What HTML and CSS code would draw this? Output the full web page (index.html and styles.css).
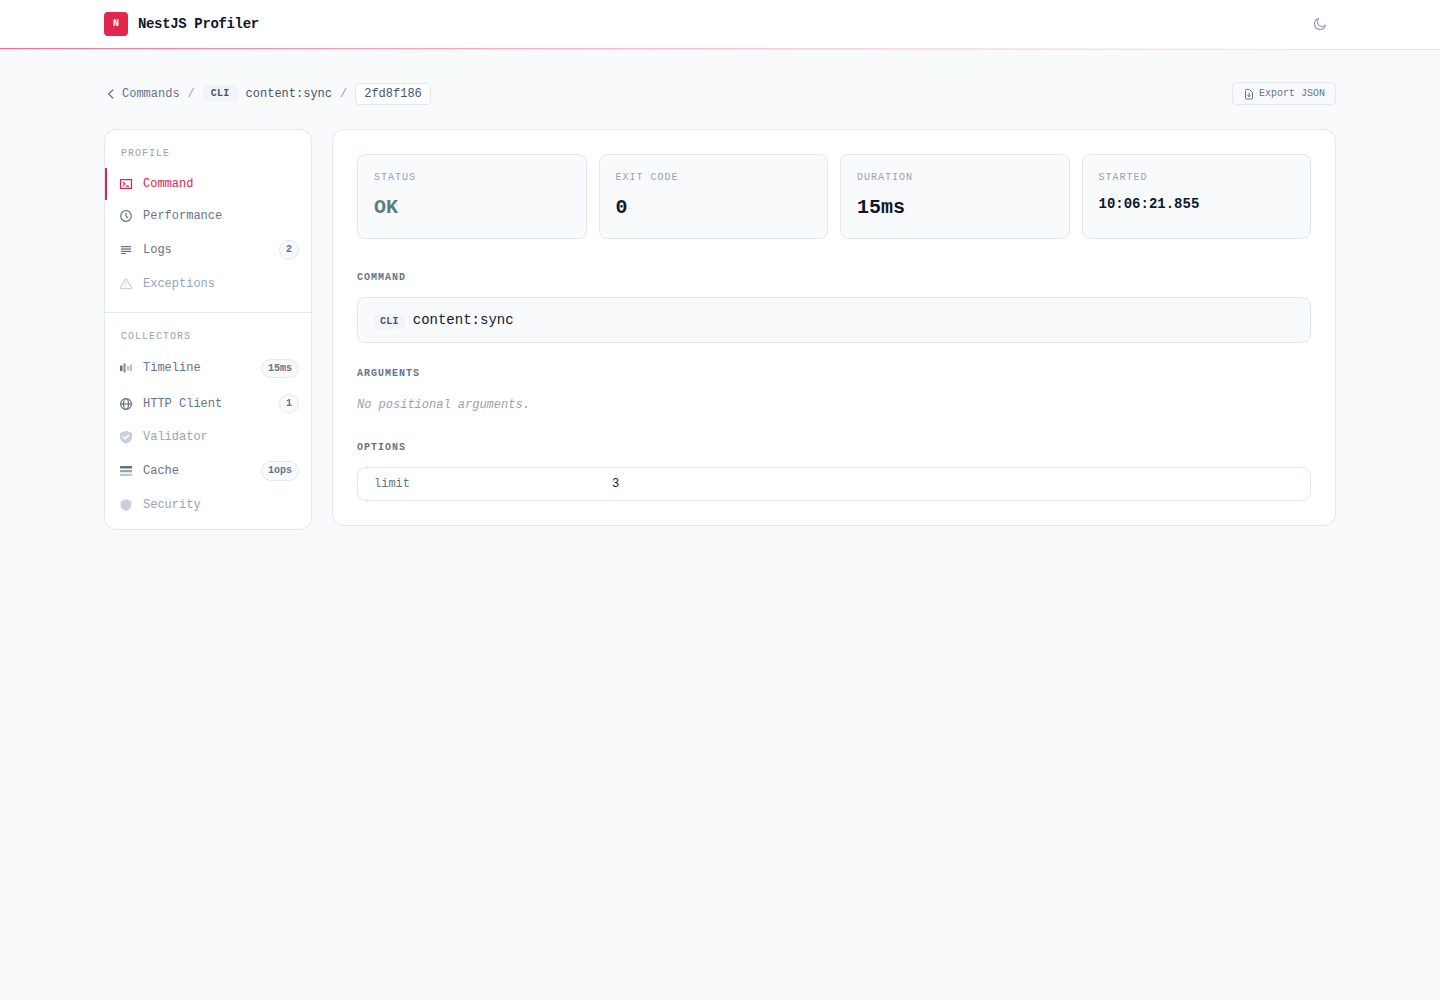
FILE: index.html
```html
<!DOCTYPE html>
<html lang="en">
<head>
<meta charset="utf-8">
<title>NestJS Profiler</title>
<link rel="stylesheet" href="styles.css">
</head>
<body>
<header class="header">
  <div class="header-inner">
    <div class="brand"><span class="logo">N</span><span class="brand-name">NestJS Profiler</span></div>
    <button class="theme" aria-label="Theme"><svg width="14" height="14" viewBox="0 0 14 14" fill="none" stroke="currentColor" stroke-width="1.2" stroke-linejoin="round"><path d="M12.400 8.200A5.500 5.500 0 1 1 5.800 1.600a4.600 4.600 0 0 0 6.600 6.600z"/></svg></button>
  </div>
  <div class="accent"></div>
</header>
<main class="page">
  <div class="topbar">
    <nav class="crumbs">
      <a class="back"><svg width="14" height="14" viewBox="0 0 14 14" fill="none" stroke="currentColor" stroke-width="1.2" stroke-linecap="round" stroke-linejoin="round"><path d="M8.800 3 4.700 7l4.100 4"/></svg>Commands</a>
      <span class="sep">/</span><span class="tag">CLI</span><span class="crumb-name">content:sync</span><span class="sep">/</span><span class="hash">2fd8f186</span>
    </nav>
    <button class="export"><svg width="12" height="12" viewBox="0 0 12 12" fill="none" stroke="currentColor"><path d="M2.500 10V2.500a1 1 0 0 1 1-1h3l3 3V10a1 1 0 0 1-1 1h-5a1 1 0 0 1-1-1z"/><path d="M6 4.800v4M4.300 7 6 8.700 7.700 7"/></svg>Export JSON</button>
  </div>
  <div class="columns">
    <aside class="card sidebar">
      <section class="group">
        <h2 class="group-title">PROFILE</h2>
        <a class="item active"><svg class="icon" viewBox="0 0 14 14" fill="none" stroke="currentColor" stroke-width="1.200"><path d="M1.500 2.700h11v8.600h-11z"/><path d="M4 5l2 2-2 2M7 9.200h3"/></svg>Command</a>
        <a class="item"><svg class="icon" viewBox="0 0 14 14" fill="none" stroke="currentColor" stroke-width="1.200"><circle cx="7" cy="7" r="5.300"/><path d="M7 3.800V7l2 2.200"/></svg>Performance</a>
        <a class="item badged"><svg class="icon" viewBox="0 0 14 14" fill="currentColor"><path d="M2 3h10v1.200H2zM2 7.800h10V9H2zM2 10h5v1H2z"/><path opacity=".65" d="M2 5h10v2H2z"/></svg>Logs<span class="badge">2</span></a>
        <a class="item off"><svg class="icon" viewBox="0 0 14 14" fill="none" stroke="currentColor" stroke-width="1.200" stroke-linejoin="round"><path d="M6.100 2.800q.9-1.300 1.800 0l4.400 7.300q.6 1.400-.9 1.600H2.600q-1.500-.2-.9-1.600z"/><path d="M7 5.500v2.600M7 9v1"/></svg>Exceptions</a>
      </section>
      <section class="group collectors">
        <h2 class="group-title">COLLECTORS</h2>
        <a class="item badged"><svg class="icon" viewBox="0 0 14 14" fill="currentColor"><path d="M1 4.500h2.500V10H1z"/><path opacity=".7" d="M4.300 2.500h2.500v9H4.300z"/><path opacity=".4" d="M8 5h2.500v4.500H8z"/><path opacity=".6" d="M11.300 3.500h1.500V10h-1.500z"/></svg>Timeline<span class="badge">15ms</span></a>
        <a class="item badged"><svg class="icon" viewBox="0 0 14 14" fill="none" stroke="currentColor" stroke-width="1.200"><circle cx="7" cy="7" r="5.400"/><ellipse cx="7" cy="7" rx="2.500" ry="5.400"/><path d="M1.600 7h10.800"/></svg>HTTP Client<span class="badge">1</span></a>
        <a class="item off"><svg class="icon" viewBox="0 0 14 14" fill="currentColor"><path d="M7 .8l6 2.300v4.100c0 3.100-2.500 5.200-6 6.600-3.500-1.400-6-3.500-6-6.600V3.100z"/><path d="m4.300 6.700 1.900 1.900 3.700-3.700" fill="none" stroke="#fff" stroke-width="1.600"/></svg>Validator</a>
        <a class="item badged"><svg class="icon cache" viewBox="0 0 14 14" fill="currentColor"><rect x="1" y="2" width="12" height="2.500" rx=".5"/><rect x="1" y="6" width="12" height="2.300" rx=".5" opacity=".65"/><rect x="1" y="9.700" width="12" height="2.300" rx=".5" opacity=".4"/></svg>Cache<span class="badge">1ops</span></a>
        <a class="item off"><svg class="icon" viewBox="0 0 14 14" fill="currentColor"><path d="M7 1.200l5.300 2v4c0 2.800-2.200 4.700-5.300 5.900-3.100-1.200-5.300-3.100-5.300-5.900v-4z"/></svg>Security</a>
      </section>
    </aside>
    <div class="card content">
      <div class="stats">
        <div class="stat"><div class="label">STATUS</div><div class="value ok">OK</div></div>
        <div class="stat"><div class="label">EXIT CODE</div><div class="value">0</div></div>
        <div class="stat"><div class="label">DURATION</div><div class="value">15ms</div></div>
        <div class="stat"><div class="label">STARTED</div><div class="value time">10:06:21.855</div></div>
      </div>
      <h3 class="title">COMMAND</h3>
      <div class="command"><span class="tag small">CLI</span><span>content:sync</span></div>
      <h3 class="title">ARGUMENTS</h3>
      <p class="empty">No positional arguments.</p>
      <h3 class="title">OPTIONS</h3>
      <div class="option"><span class="key">limit</span><span>3</span></div>
    </div>
  </div>
</main>
</body>
</html>
```

FILE: styles.css
```css
* { box-sizing: border-box; }
body { margin: 0; background: #f8fafc; color: #0f172a; font: 12px/16px "Liberation Mono", monospace; }
button { font: inherit; }
h2, h3, p { margin: 0; }
svg { display: block; flex: none; }
.header { height: 50px; background: #fff; border-bottom: 1px solid #e2e8f0; }
.header-inner { width: 1232px; height: 48px; margin: 0 auto; display: flex; align-items: center; justify-content: space-between; }
.accent { height: 1px; background: linear-gradient(90deg, #ee6f8b, #f7a8b9 30%, #fbd5dd 60%, #fff 90%); }
.brand { display: flex; align-items: center; gap: 10px; }
.logo { width: 24px; height: 24px; border-radius: 4px; background: #e0284f; color: #fff; font-size: 10px; line-height: 23px; font-weight: 700; text-align: center; }
.brand-name { font-size: 14px; font-weight: 700; letter-spacing: -.35px; }
.theme { width: 32px; height: 32px; padding: 9px; border: 0; background: none; color: #94a3b8; }
.page { width: 1232px; margin: 0 auto; padding-top: 32px; }
.topbar { height: 23px; display: flex; align-items: center; justify-content: space-between; margin-bottom: 24px; }
.crumbs { display: flex; align-items: center; gap: 8px; color: #64748b; }
.back { display: flex; align-items: center; gap: 4px; }
.sep { color: #94a3b8; }
.tag { height: 17px; padding: 0 8px; border-radius: 4px; background: #f1f5f9; color: #475569; font-size: 10px; line-height: 17px; font-weight: 700; letter-spacing: .25px; }
.crumb-name, .hash { color: #475569; }
.hash { height: 22px; line-height: 20px; padding: 0 8px; background: #fff; border: 1px solid #e2e8f0; border-radius: 4px; }
.export { height: 23px; display: flex; align-items: center; gap: 4px; padding: 0 10px; border: 1px solid #e2e8f0; border-radius: 4px; background: #f8fafc; color: #64748b; font-size: 10px; line-height: 20px; }
.columns { display: grid; grid-template-columns: 208px 1004px; gap: 20px; align-items: start; }
.card { background: #fff; border: 1px solid #e2e8f0; border-radius: 12px; }
.group { padding-bottom: 12px; border-bottom: 1px solid #e2e8f0; }
.group-title { height: 38px; padding: 16px 16px 0; font-size: 10px; font-weight: 400; letter-spacing: 1px; color: #94a3b8; }
.item { height: 32px; display: flex; align-items: center; gap: 10px; padding: 0 12px 0 14px; color: #64748b; }
.item.badged { height: 35.500px; }
.collectors { padding-bottom: 8.200px; border-bottom: 0; }
.collectors .group-title { height: 38.100px; }
.collectors .badged { height: 35.400px; }
.cache { color: #5a7680; }
.item.active { color: #e0234e; padding-left: 12px; border-left: 2px solid #e0234e; }
.item.off { color: #94a3b8; }
.off .icon { opacity: .5; }
.icon { width: 14px; height: 14px; }
.badge { margin-left: auto; padding: 0 6px; height: 19.500px; border: 1px solid #e2e8f0; border-radius: 10px; background: #f8fafc; color: #64748b; font-size: 10px; line-height: 17.500px; font-weight: 700; }
.content { padding: 24px; height: 397px; }
.stats { display: grid; grid-template-columns: repeat(4, 1fr); gap: 12px; margin-bottom: 31px; }
.stat { height: 85px; padding: 15px 16px; border: 1px solid #e2e8f0; border-radius: 8px; background: #f8fafc; }
.label { font-size: 10px; letter-spacing: 1px; color: #94a3b8; }
.value { margin-top: 8px; font-size: 20px; line-height: 28px; font-weight: 700; }
.value.time { font-size: 14px; line-height: 20px; }
.ok { color: #5b7f7f; }
.title { font-size: 10px; letter-spacing: 1px; color: #64748b; }
.command { height: 46px; margin: 11px 0 23px; padding: 0 16px; display: flex; align-items: center; gap: 8px; border: 1px solid #e2e8f0; border-radius: 8px; background: #f8fafc; font-size: 14px; }
.small { height: 15px; padding: 0 6px; line-height: 15px; margin-top: 3px; letter-spacing: .25px; }
.empty { margin: 15px 0 27px; font-style: italic; color: #94a3b8; }
.option { height: 34px; margin-top: 11px; padding: 0 16px; display: grid; grid-template-columns: 238px 1fr; align-items: center; border: 1px solid #e2e8f0; border-radius: 8px; }
.key { color: #64748b; }
```
